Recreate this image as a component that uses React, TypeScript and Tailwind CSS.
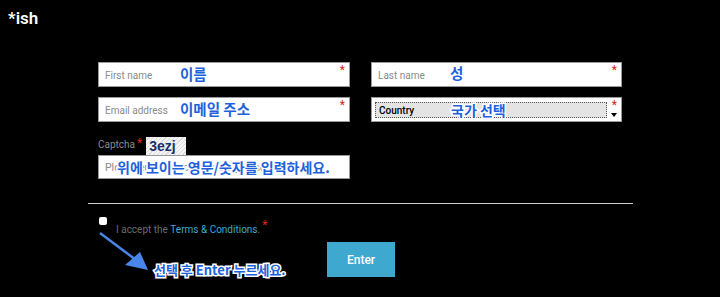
import React from 'react';

const note =
  "absolute font-bold text-[#1d62dc] [font-family:'Noto_Sans_CJK_KR','Noto_Sans',sans-serif] [-webkit-text-stroke:3px_white] [paint-order:stroke_fill] whitespace-nowrap leading-none";

const Star = () => <span className="absolute right-[4px] top-[1px] text-[12px] leading-none text-[#e02424]">*</span>;

const Field = ({ placeholder, children }: { placeholder: string; children?: React.ReactNode }) => (
  <div className="relative flex h-[25px] items-center border border-[#999] bg-white pl-[6px] pt-[2px]">
    <span className="text-[10px] leading-none text-[#8a8a8a]">{placeholder}</span>
    <Star />
    {children}
  </div>
);

export default function App() {
  return (
    <div className="relative h-[297px] w-[720px] overflow-hidden bg-black [font-family:Roboto,'Liberation_Sans',sans-serif]">
      <div className="pl-[8px] pt-[7px] text-[17px] font-semibold leading-[22px] text-white">*ish</div>

      <div className="mx-[88px] mt-[33px] px-[10px]">
        <div className="grid grid-cols-[252px_251px] gap-x-[21px] gap-y-[10px]">
          <Field placeholder="First name">
            <span className={note + ' left-[81px] top-[4px] text-[14.5px]'}>이름</span>
          </Field>
          <Field placeholder="Last name">
            <span className={note + ' left-[78px] top-[3px] text-[14.5px]'}>성</span>
          </Field>
          <Field placeholder="Email address">
            <span className={note + ' left-[81px] top-[4px] text-[14.5px]'}>이메일 주소</span>
          </Field>
          <div className="relative h-[25px] border border-[#999] bg-white">
            <div className="ml-[3px] mr-[14px] mt-[4px] flex h-[16px] items-center border border-dotted border-[#555] bg-[#e4e4e4] pl-[3px] text-[10px] font-medium text-black">
              Country
            </div>
            <Star />
            <span className="absolute right-[4px] top-[15px] h-0 w-0 border-x-[3px] border-t-[4px] border-x-transparent border-t-black" />
            <span className={note + ' left-[79px] top-[5px] text-[14px]'}>국가 선택</span>
          </div>
        </div>

        <div className="mt-[15px] flex items-end">
          <span className="mb-[3px] text-[10px] text-[#8a8a8a]">Captcha</span>
          <span className="mb-[6px] ml-[2px] text-[12px] leading-none text-[#e02424]">*</span>
          <div className="ml-[4px] flex h-[18px] w-[40px] items-center bg-[repeating-linear-gradient(135deg,#f4f4f4_0_2px,#dcdcdc_2px_3px)] pl-[3px] text-[14px] font-bold leading-none text-[#1a2f6e] [font-family:'Liberation_Sans',sans-serif]">
            3ezj
          </div>
        </div>
        <div className="relative flex h-[24px] w-[252px] items-center overflow-hidden border border-[#999] bg-white pl-[6px] pt-[2px]">
          <span className="whitespace-nowrap text-[10.5px] leading-none text-[#8a8a8a]">
            Please enter the characters you see above
          </span>
          <span className={note + ' left-[18px] top-[4px] text-[14px]'}>위에 보이는 영문/숫자를 입력하세요.</span>
        </div>
      </div>

      <div className="mx-[88px] mt-[24px] h-px w-[545px] bg-[#cfcfcf]" />

      <div className="relative ml-[99px] mt-[13px]">
        <div className="h-[8px] w-[8px] rounded-[2px] bg-white" />
        <div className="ml-[17px] mt-[-1px] flex items-start text-[10px] leading-[12px] text-[#6a6a6a]">
          <span>I accept the&nbsp;</span>
          <span className="text-[#3fa9d0]">Terms &amp; Conditions</span>
          <span>.</span>
          <span className="ml-[2px] mt-[-5px] text-[12px] text-[#e02424]">*</span>
        </div>
        <div className="ml-[228px] mt-[6px] flex h-[35px] w-[68px] items-center justify-center bg-[#3ea8cf] text-[12px] font-medium text-white">
          Enter
        </div>
        <span className={note + ' left-[55px] top-[46px] text-[13px]'}>선택 후 Enter 누르세요.</span>
      </div>

      <svg className="absolute left-0 top-0" width="720" height="297">
        <line x1="100" y1="233" x2="140" y2="263" stroke="#4a86ea" strokeWidth="2.5" />
        <polygon points="148,270 125,265 140,252" fill="#4a86ea" />
      </svg>
    </div>
  );
}
